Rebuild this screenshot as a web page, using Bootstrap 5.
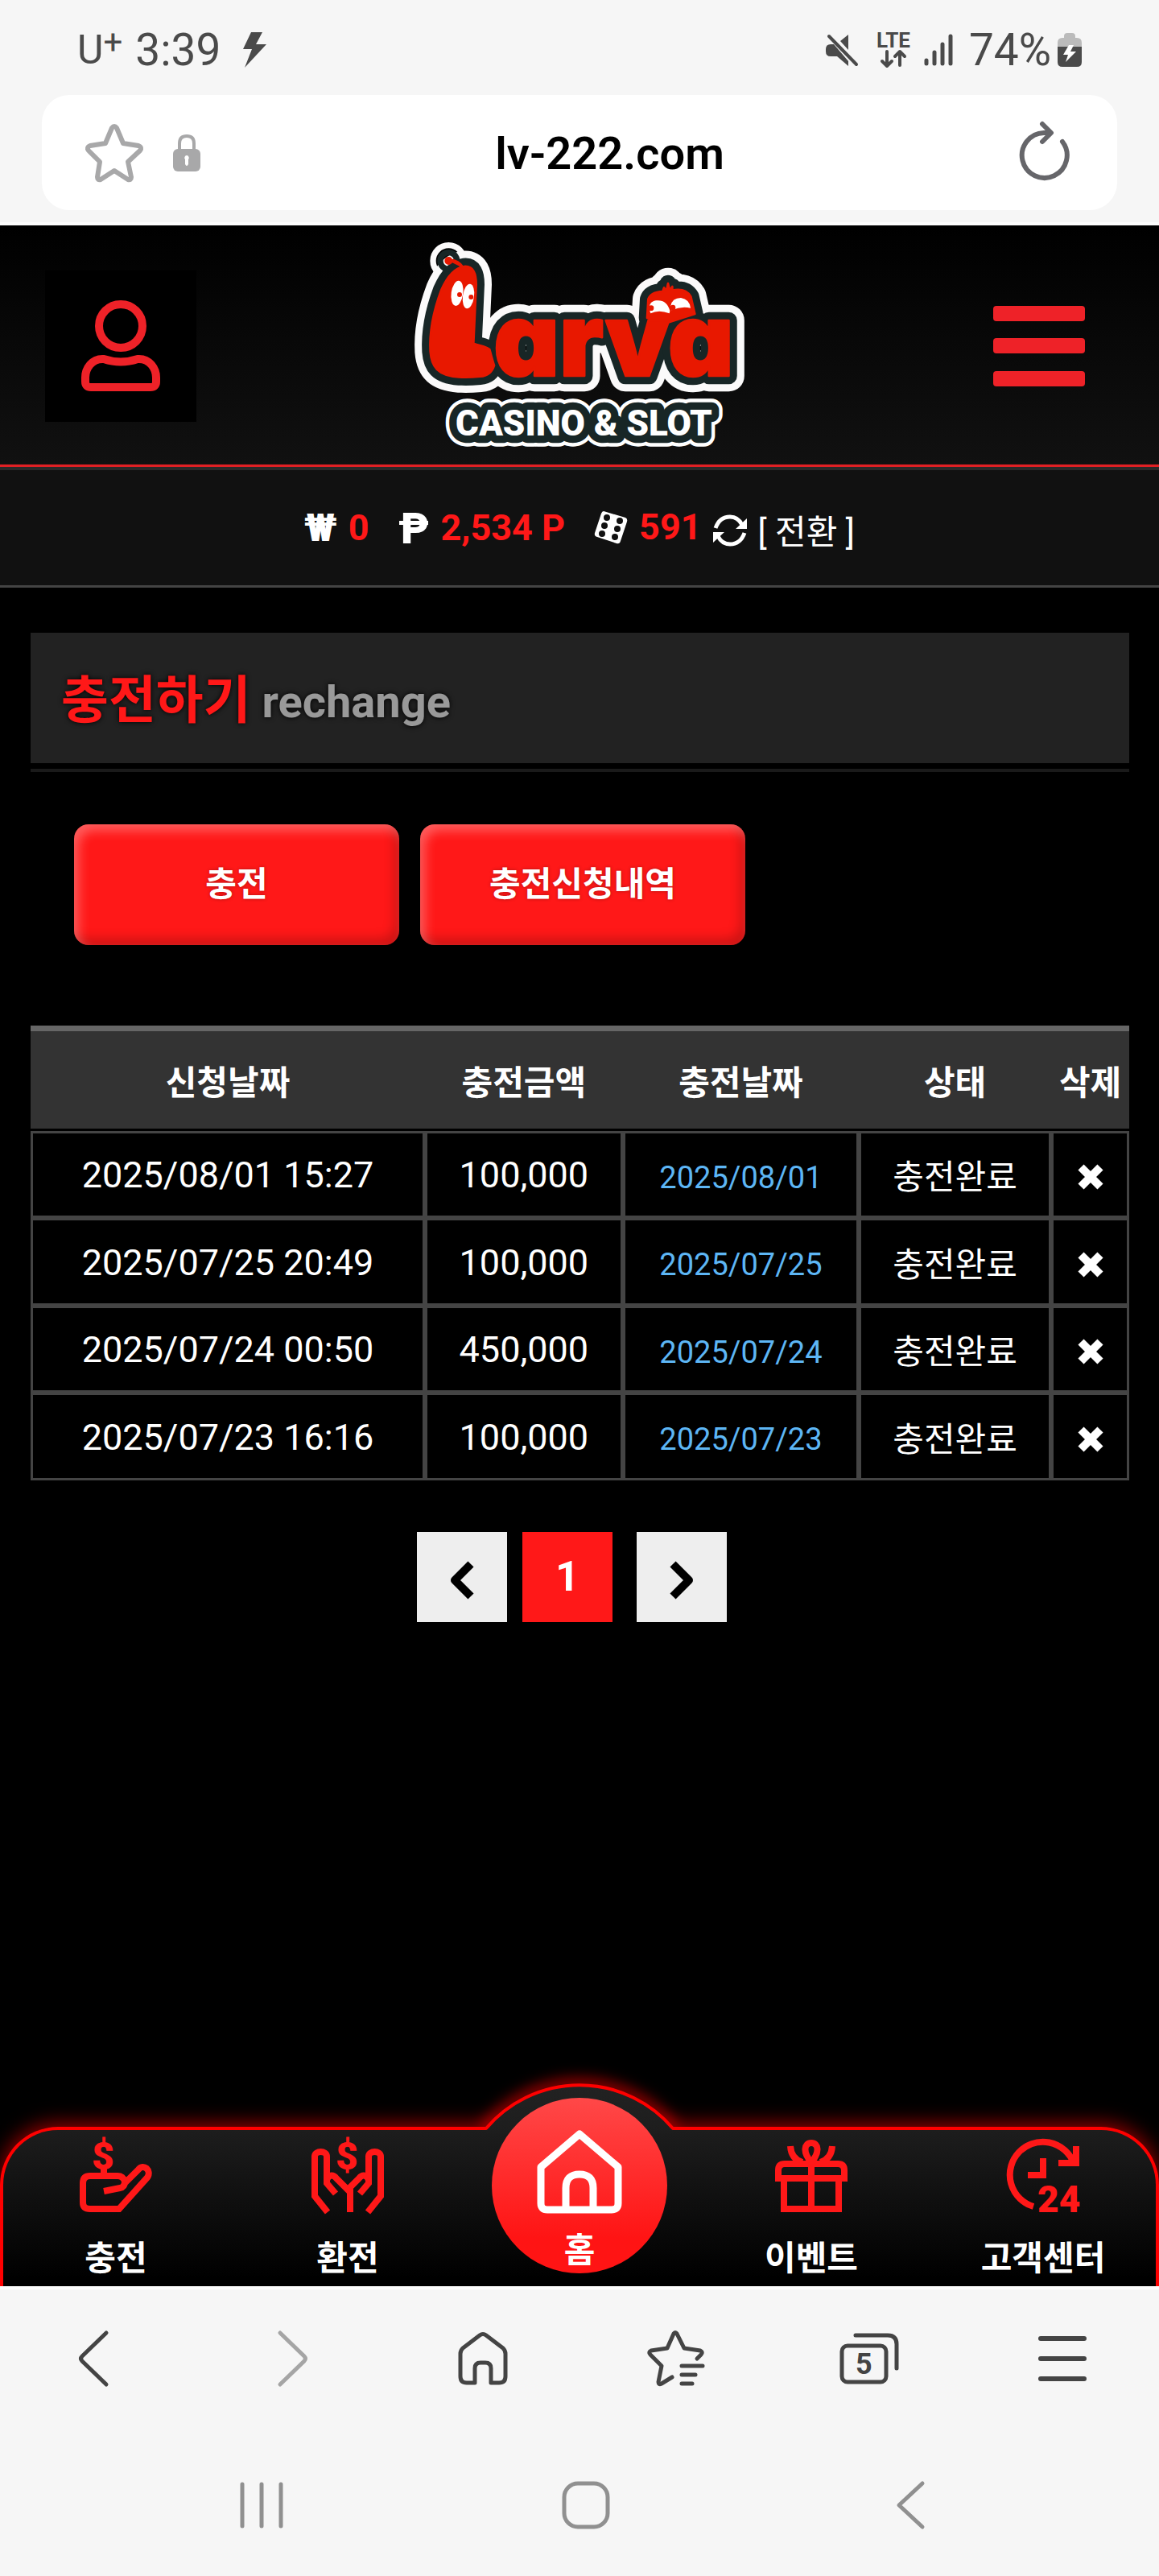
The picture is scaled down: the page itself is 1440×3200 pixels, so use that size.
<!DOCTYPE html>
<html lang="ko">
<head>
<meta charset="utf-8">
<meta name="viewport" content="width=device-width, initial-scale=1">
<title>충전하기 - Larva Casino &amp; Slot</title>
<link href="https://cdn.jsdelivr.net/npm/bootstrap@5.3.0/dist/css/bootstrap.min.css" rel="stylesheet">
<script src="https://cdn.jsdelivr.net/npm/bootstrap@5.3.0/dist/js/bootstrap.bundle.min.js"></script>
<style>
  :root { --red: #ff1818; --ink: #4a4a4a; --chrome: #f6f6f6; }
  body { background: #000; color: #fff; font-family: Roboto, "Noto Sans CJK KR", sans-serif; font-size: 42px; line-height: 1.2; }
  svg { display: block; flex: none; overflow: visible; }
  .plain { background: none; border: 0; padding: 0; color: inherit; text-decoration: none; }

  /* phone status bar and address bar */
  .phone-top { background: var(--chrome); color: var(--ink); border-bottom: 4px solid #fdfdfd; padding: 0 52px 15px; }
  .status-line { height: 118px; padding: 6px 44px 0 44px; font-size: 55px; font-weight: 400; line-height: 64px; }
  .carrier { font-size: 50px; line-height: 64px; }
  .carrier sup { font-size: 42px; top: -12px; line-height: 0; }
  .charge { margin-left: 20px; }
  .address { background: #fff; height: 143px; border-radius: 34px; padding: 0 60px 0 54px; }
  .lock { margin-left: 37px; }
  .address input { font-size: 56px; font-weight: 600; color: #000; min-width: 0; padding-top: 4px; }

  /* site header */
  .site-head { background: linear-gradient(#000, #111); height: 304px; border-bottom: 4px solid #2a2a2a; }
  .site-head-inner { height: 300px; border-bottom: 3px solid #e02024; padding: 2px 92px 0 56px; }
  .head-side { flex: 1 1 0; }
  .head-left { margin-right: 36px; }
  .user-btn { width: 188px; height: 188px; background: #000; }
  .balance { background: #111; height: 146px; border-bottom: 3px solid #444; font-size: 45px; font-weight: 700; gap: 37px; }
  .balance strong { color: var(--red); font-weight: 700; }
  .coin { gap: 14px; }
  .won { font-size: 48px; font-weight: 900; }
  .convert { font-size: 42px; font-weight: 400; padding-top: 14px; }

  /* content */
  .content { padding: 56px 37px 80px 38px; }
  .page-title { background: #222; height: 162px; padding: 8px 38px 0; gap: 14px; text-shadow: 0 0 6px #000; margin: 0 0 7px; }
  .title-ko { color: var(--red); font-size: 64px; font-weight: 700; }
  .title-en { color: #999; font-size: 56px; font-weight: 700; padding-top: 4px; }
  .title-rule { height: 4px; background: #1a1a1a; }
  .tabs-row { padding: 65px 54px 100px; gap: 26px; }
  .tab-btn { width: 404px; height: 150px; border: 0; border-radius: 18px; background: var(--red); color: #fff; font-size: 42px; font-weight: 700;
    box-shadow: inset 6px 8px 14px rgba(255,255,255,.3), inset -6px -8px 14px rgba(0,0,0,.2); text-shadow: 0 0 4px rgba(0,0,0,.3); }
  .history { border-collapse: separate; border-spacing: 0; table-layout: fixed; width: 100%; text-align: center; margin: 0; }
  .history th { background: #333; border-top: 7px solid #666; border-bottom: 3px solid #000; height: 131px; padding: 10px 0 0; font-size: 42px; font-weight: 700; vertical-align: middle; white-space: nowrap; }
  .history td { border: 3px solid #444; height: 108px; padding: 2px 0 0; font-size: 45px; line-height: 54px; vertical-align: middle; white-space: nowrap; }
  .history tr:nth-child(even) td { height: 109px; }
  .history .done-date { color: #5db6f5; font-size: 38px; padding-top: 7px; }
  .history .state { font-size: 42px; padding-top: 8px; }
  .history .erase { padding-top: 8px; }
  .pager { padding: 64px 20px 0 0; gap: 19px; margin: 0; }
  .page-box { width: 112px; height: 112px; background: #eee; color: #000; font-size: 52px; font-weight: 700; text-decoration: none; }
  .page-box.current { background: var(--red); color: #fff; }
  .page-next { margin-left: 11px; }

  /* bottom site menu */
  .dock { position: relative; height: 198px; border: 4px solid #f00; border-bottom: 0; border-radius: 72px 72px 0 0; background: linear-gradient(#1d1d1d, #000 95%);
    box-shadow: 0 -4px 24px rgba(255,0,0,.6); }
  .dock-bump { position: absolute; left: 50%; top: -88px; margin-left: -160px; }
  .dock-items { position: relative; margin: 0 -4px; }
  .dock-link { flex: 1 1 0; height: 194px; padding-top: 12px; gap: 28px; color: #fff; text-decoration: none; font-size: 42px; font-weight: 700; line-height: 60px; }
  .dock-link svg { color: var(--red); }
  .home-disc { width: 218px; height: 218px; border-radius: 50%; background: linear-gradient(#ff4848, #ff1414 80%); margin-top: -40px; padding-top: 40px; gap: 16px; }
  .home-disc svg { color: #fff; }

  /* phone browser and system bars */
  .phone-bottom { position: relative; background: var(--chrome); color: #444; border-top: 4px solid #fdfdfd; }
  .tools { height: 172px; }
  .tools > *, .keys > * { flex: 1 1 0; }
  .keys { height: 184px; color: #909090; padding: 8px 107px 0 123px; }
</style>
</head>
<body class="d-flex flex-column min-vh-100">

<header class="phone-top">
  <div class="status-line d-flex align-items-center justify-content-between">
    <div class="d-flex align-items-center">
      <span class="carrier">U<sup>+</sup></span>
      <span class="ms-3">3:39</span>
      <svg class="ms-4" width="40" height="44" viewBox="0 0 40 44" fill="currentColor" aria-hidden="true"><path d="M14 0H28L20 15H33L6 44L15 21H4Z"/></svg>
    </div>
    <div class="d-flex align-items-center">
      <svg width="40" height="40" viewBox="0 0 40 40" fill="currentColor" aria-hidden="true"><path d="M28 1V20L18 9ZM6 13H10L28 34V40L14 28H6Q0 28 0 22V19Q0 13 6 13Z"/><path d="M4 3L38 38" stroke="currentColor" stroke-width="4" stroke-linecap="round"/></svg>
      <svg class="ms-4" width="42" height="46" viewBox="0 0 42 46" fill="currentColor" aria-hidden="true"><text x="-1" y="20" font-family="Roboto" font-size="26" font-weight="700">LTE</text><path d="M12 25V43M6 37L12 43L18 37M28 42V25M22 31L28 25L34 31" fill="none" stroke="currentColor" stroke-width="4" stroke-linecap="round" stroke-linejoin="round"/></svg>
      <svg class="ms-3" width="36" height="40" viewBox="0 0 36 40" fill="none" stroke="currentColor" stroke-width="5" stroke-linecap="round" aria-hidden="true"><path d="M3 33V37M13 23V37M23 13V37M33 3V37"/></svg>
      <span class="charge">74%</span>
      <svg class="ms-2" width="30" height="42" viewBox="0 0 30 42" aria-hidden="true"><path d="M8 4Q8 0 12 0H18Q22 0 22 4V6H24Q30 6 30 12V18H0V12Q0 6 6 6H8Z" fill="#bbb"/><path d="M0 17H30V36Q30 42 24 42H6Q0 42 0 36Z" fill="currentColor"/><path d="M14 15L7 27H13L10 36L23 23H16L20 15Z" fill="#fff"/></svg>
    </div>
  </div>
  <div class="address d-flex align-items-center">
    <button class="plain" type="button" aria-label="즐겨찾기 추가"><svg width="72" height="72" viewBox="0 0 72 72" fill="none" stroke="#a8a8a9" stroke-width="6" stroke-linejoin="round"><path d="M33 5Q36 1 39 5L47 24L66 27Q71 29 68 33L53 47L57 66Q57 70 53 69L36 58L19 69Q15 70 15 66L18 47L4 33Q1 29 6 27L25 24Z"/></svg></button>
    <svg class="lock" width="34" height="46" viewBox="0 0 34 46" aria-hidden="true"><path d="M8 20V11Q8 2 17 2Q26 2 26 11V20" fill="none" stroke="#a8a8a9" stroke-width="4"/><rect y="18" width="34" height="28" rx="6" fill="#a8a8a9"/><path d="M17 26A3 3 0 0 1 19 31V37Q17 41 15 37V31A3 3 0 0 1 17 26Z" fill="#fff"/></svg>
    <input class="plain flex-grow-1 text-center" type="text" value="lv-222.com" aria-label="주소">
    <button class="plain" type="button" aria-label="새로고침"><svg width="62" height="74" viewBox="0 0 62 74" fill="none" stroke="#66666a" stroke-width="6" stroke-linecap="round" stroke-linejoin="round"><path d="M54 23A28 28 0 1 1 31 12H38M29 1L40 12L29 23"/></svg></button>
  </div>
</header>

<div class="site-head">
  <div class="site-head-inner d-flex align-items-center">
    <div class="head-side head-left">
      <button class="plain user-btn d-flex align-items-center justify-content-center" type="button" aria-label="내 정보">
        <svg width="100" height="114" viewBox="0 0 100 114" fill="none" stroke="#ee2228" stroke-width="10" stroke-linejoin="round"><circle cx="50" cy="32" r="27"/><path d="M29 73Q50 80 71 73C86 72 94 85 94 96V101Q94 108 87 108H13Q6 108 6 101V96C6 85 14 72 29 73Z"/></svg>
      </button>
    </div>
    <a class="plain" href="#" aria-label="Larva Casino &amp; Slot">
      <svg width="420" height="265" viewBox="90 51 1260 795">
        <defs>
          <g id="larva-shape" stroke-linejoin="round" stroke-linecap="round">
            <path d="M290 153C325 150 335 180 335 220L325 440C350 450 365 448 385 462Q395 500 402 522Q390 560 350 563Q300 568 270 565C190 560 168 525 164 470C160 400 175 320 205 240Q240 160 290 153Z"/>
            <path d="M232 132Q265 128 285 158" stroke-width="12"/>
            <circle cx="232" cy="132" r="11"/>
            <path d="M972 345L976 275Q985 248 1030 246L1035 232L1044 244L1050 216L1056 242L1066 228L1066 242Q1115 232 1135 265L1150 330L1040 365Z"/>
            <text x="400" y="560" font-family="Inter, sans-serif" font-size="380" font-weight="900" style="font-feature-settings:'cv11'">arva</text>
          </g>
          <text id="casino-word" x="258" y="782" font-family="Roboto, sans-serif" font-size="132" font-weight="900" stroke-linejoin="round">CASINO &amp; SLOT</text>
        </defs>
        <use href="#casino-word" fill="#fff" stroke="#fff" stroke-width="82"/>
        <use href="#casino-word" fill="#182626" stroke="#182626" stroke-width="56"/>
        <use href="#larva-shape" fill="#fbfafa" stroke="#fbfafa" stroke-width="116"/>
        <use href="#larva-shape" fill="#182626" stroke="#182626" stroke-width="62"/>
        <use href="#casino-word" fill="#fff"/>
        <use href="#larva-shape" fill="#e81800" stroke="#e81800" stroke-width="8"/>
        <g fill="#fff"><ellipse cx="264" cy="253" rx="22" ry="47" transform="rotate(8 264 253)"/><ellipse cx="306" cy="264" rx="21" ry="46" transform="rotate(8 306 264)"/>
          <path d="M982 318Q975 285 1005 280Q1045 275 1057 318L1055 328Q1015 312 985 328Z"/><path d="M1060 300Q1065 270 1098 270Q1130 275 1134 308Q1100 300 1064 316Z"/></g>
        <g fill="#e81800"><circle cx="273" cy="258" r="9"/><circle cx="316" cy="267" r="9"/><circle cx="987" cy="308" r="10"/><circle cx="1068" cy="306" r="10"/></g>
      </svg>
    </a>
    <div class="head-side d-flex justify-content-end">
      <button class="plain" type="button" aria-label="메뉴"><svg width="114" height="102" viewBox="0 0 114 102" fill="#ee2228"><rect y="1" width="114" height="19" rx="4"/><rect y="41" width="114" height="19" rx="4"/><rect y="82" width="114" height="19" rx="4"/></svg></button>
    </div>
  </div>
</div>

<div class="balance d-flex align-items-center justify-content-center">
  <span class="coin d-flex align-items-center"><span class="won">₩</span><strong>0</strong></span>
  <span class="coin d-flex align-items-center"><svg width="38" height="40" viewBox="0 0 38 40" fill="#fff" aria-hidden="true"><text x="2" y="39" font-family="Roboto" font-size="54" font-weight="900">P</text><rect y="11" width="36" height="5"/></svg><strong>2,534 P</strong></span>
  <span class="coin d-flex align-items-center">
    <svg width="41" height="40" viewBox="0 0 41 40" aria-hidden="true"><path d="M11 0L38 8Q41 9 40 13L32 37Q31 41 27 40L3 32Q-1 31 0 27L8 3Q9 0 11 0Z" fill="#fff"/><g fill="#111"><circle cx="15" cy="8" r="4"/><circle cx="12" cy="18" r="4"/><circle cx="9" cy="28" r="4"/><circle cx="31" cy="12" r="4"/><circle cx="28" cy="22" r="4"/><circle cx="25" cy="32" r="4"/></g></svg>
    <strong>591</strong>
    <button class="plain coin d-flex align-items-center" type="button">
      <svg width="42" height="40" viewBox="0 0 42 40" class="mt-2" fill="none" stroke="#fff" stroke-width="5" aria-hidden="true"><path d="M3 17Q8 3 21 3Q31 3 36 13M39 23Q34 37 21 37Q11 37 6 27"/><path d="M42 5V18H28ZM0 35V22H14Z" fill="#fff" stroke="none"/></svg>
      <span class="convert">[ 전환 ]</span>
    </button>
  </span>
</div>

<main class="content flex-grow-1">
  <h1 class="page-title d-flex align-items-center"><span class="title-ko">충전하기</span><span class="title-en">rechange</span></h1>
  <div class="title-rule"></div>

  <div class="tabs-row d-flex">
    <button class="tab-btn" type="button">충전</button>
    <button class="tab-btn" type="button">충전신청내역</button>
  </div>

  <table class="history">
    <colgroup><col style="width:35.9%"><col style="width:18%"><col style="width:21.5%"><col style="width:17.5%"><col style="width:7.1%"></colgroup>
    <thead><tr><th scope="col">신청날짜</th><th scope="col">충전금액</th><th scope="col">충전날짜</th><th scope="col">상태</th><th scope="col">삭제</th></tr></thead>
    <tbody>
      <tr><td>2025/08/01 15:27</td><td>100,000</td><td class="done-date">2025/08/01</td><td class="state">충전완료</td><td class="erase"><button class="plain" type="button" aria-label="삭제"><svg width="32" height="32" viewBox="0 0 32 32" stroke="#fff" stroke-width="10"><path d="M4 4L28 28M28 4L4 28"/></svg></button></td></tr>
      <tr><td>2025/07/25 20:49</td><td>100,000</td><td class="done-date">2025/07/25</td><td class="state">충전완료</td><td class="erase"><button class="plain" type="button" aria-label="삭제"><svg width="32" height="32" viewBox="0 0 32 32" stroke="#fff" stroke-width="10"><path d="M4 4L28 28M28 4L4 28"/></svg></button></td></tr>
      <tr><td>2025/07/24 00:50</td><td>450,000</td><td class="done-date">2025/07/24</td><td class="state">충전완료</td><td class="erase"><button class="plain" type="button" aria-label="삭제"><svg width="32" height="32" viewBox="0 0 32 32" stroke="#fff" stroke-width="10"><path d="M4 4L28 28M28 4L4 28"/></svg></button></td></tr>
      <tr><td>2025/07/23 16:16</td><td>100,000</td><td class="done-date">2025/07/23</td><td class="state">충전완료</td><td class="erase"><button class="plain" type="button" aria-label="삭제"><svg width="32" height="32" viewBox="0 0 32 32" stroke="#fff" stroke-width="10"><path d="M4 4L28 28M28 4L4 28"/></svg></button></td></tr>
    </tbody>
  </table>

  <nav aria-label="페이지">
    <ul class="pager list-unstyled d-flex justify-content-center">
      <li><a class="page-box d-flex align-items-center justify-content-center" href="#" aria-label="이전"><svg width="32" height="48" viewBox="0 0 32 48" fill="none" stroke="#000" stroke-width="10" stroke-linejoin="round" class="mt-2"><path d="M27 4L7 24L27 44"/></svg></a></li>
      <li><a class="page-box current d-flex align-items-center justify-content-center" href="#" aria-current="page">1</a></li>
      <li class="page-next"><a class="page-box d-flex align-items-center justify-content-center" href="#" aria-label="다음"><svg width="32" height="48" viewBox="0 0 32 48" fill="none" stroke="#000" stroke-width="10" stroke-linejoin="round" class="mt-2"><path d="M5 4L25 24L5 44"/></svg></a></li>
    </ul>
  </nav>
</main>

<nav class="dock" aria-label="하단 메뉴">
  <svg class="dock-bump" width="320" height="92" viewBox="0 0 320 92" style="overflow:hidden" aria-hidden="true">
    <defs>
      <linearGradient id="bump-fill" x1="0" y1="0" x2="0" y2="1"><stop offset="0" stop-color="#222"/><stop offset="1" stop-color="#1d1d1d"/></linearGradient>
      <filter id="bump-glow" x="-20%" y="-60%" width="140%" height="220%"><feGaussianBlur stdDeviation="9"/></filter>
      <clipPath id="above-line"><rect width="320" height="84"/></clipPath>
    </defs>
    <g clip-path="url(#above-line)"><path d="M43 87A152 152 0 0 1 277 87" fill="none" stroke="#f00" stroke-opacity=".7" stroke-width="14" filter="url(#bump-glow)"/></g>
    <path d="M44 92V86A152 152 0 0 1 276 86V92Z" fill="url(#bump-fill)"/>
    <path d="M40 86H44A152 152 0 0 1 276 86H280" fill="none" stroke="#f00" stroke-width="4" stroke-linejoin="round"/>
  </svg>
  <div class="dock-items d-flex">
    <a class="dock-link d-flex flex-column align-items-center" href="#">
      <svg width="90" height="90" viewBox="0 0 90 90" fill="none" stroke="currentColor" stroke-width="8" aria-hidden="true"><path d="M30 64L50 60Q56 59 56 52Q54 45 47 45H13Q4 45 4 54V78Q4 86 13 86H49L84 47C90 38 79 29 73 37L56 54M30 36V45"/><text x="15" y="37" font-family="Roboto" font-size="48" font-weight="900" fill="currentColor" stroke="none">$</text></svg>
      <span>충전</span>
    </a>
    <a class="dock-link d-flex flex-column align-items-center" href="#">
      <svg width="90" height="90" viewBox="0 0 90 90" fill="none" stroke="currentColor" stroke-width="8" aria-hidden="true"><path d="M20 90L4 70V21C4 13 19 13 19 21V54L30 67M19 50C22 43 27 43 31 48L45 62L59 48C63 43 68 43 71 50M70 90L86 70V21C86 13 71 13 71 21V54L60 67M48 90V61"/><text x="30" y="37" font-family="Roboto" font-size="48" font-weight="900" fill="currentColor" stroke="none">$</text></svg>
      <span>환전</span>
    </a>
    <a class="dock-link d-flex flex-column align-items-center pt-0" href="#">
      <span class="home-disc d-flex flex-column align-items-center">
        <svg width="106" height="104" viewBox="0 0 106 104" fill="none" stroke="currentColor" stroke-width="9" stroke-linejoin="round" aria-hidden="true"><path d="M53 5L5 46V91Q5 99 13 99H93Q101 99 101 91V46ZM36 99V72Q36 55 53 55Q70 55 70 72V99"/></svg>
        <span>홈</span>
      </span>
    </a>
    <a class="dock-link d-flex flex-column align-items-center" href="#">
      <svg width="90" height="90" viewBox="0 0 90 90" fill="none" stroke="currentColor" stroke-width="8" aria-hidden="true"><path d="M4 48V38Q4 30 12 30H78Q86 30 86 38V48ZM11 50V86H79V50M45 28V86M45 28C34 16 36 4 45 4C54 4 56 16 45 28ZM19 8Q20 24 34 28M71 8Q70 24 56 28"/></svg>
      <span>이벤트</span>
    </a>
    <a class="dock-link d-flex flex-column align-items-center" href="#">
      <svg width="90" height="90" viewBox="0 0 90 90" fill="none" stroke="currentColor" stroke-width="8" aria-hidden="true"><path d="M33 83A41 41 0 1 1 83 29M86 8V29H64M45 23V44H26"/><text x="38" y="90" font-family="Roboto" font-size="46" font-weight="900" fill="currentColor" stroke="none">24</text></svg>
      <span>고객센터</span>
    </a>
  </div>
</nav>

<footer class="phone-bottom">
  <div class="tools d-flex align-items-center">
    <button class="plain d-flex justify-content-center" type="button" aria-label="뒤로"><svg width="44" height="70" viewBox="0 0 44 70" fill="none" stroke="currentColor" stroke-width="5" stroke-linecap="round" stroke-linejoin="round"><path d="M34 3L4 32Q1 35 4 38L34 67"/></svg></button>
    <button class="plain d-flex justify-content-center" type="button" aria-label="앞으로" disabled><svg width="32" height="70" viewBox="0 0 32 70" fill="none" stroke="#a5a5a5" stroke-width="5" stroke-linecap="round" stroke-linejoin="round"><path d="M4 3L34 32Q37 35 34 38L4 67"/></svg></button>
    <button class="plain d-flex justify-content-center" type="button" aria-label="홈"><svg width="62" height="66" viewBox="0 0 62 66" fill="none" stroke="currentColor" stroke-width="5" stroke-linejoin="round"><path d="M21 63H11Q3 63 3 55V27Q3 23 6 20L27 4Q31 1 35 4L56 20Q59 23 59 27V55Q59 63 51 63H41V45Q41 38 34 38H28Q21 38 21 45Z"/></svg></button>
    <button class="plain d-flex justify-content-center" type="button" aria-label="북마크"><svg width="72" height="70" viewBox="0 0 72 70" fill="none" stroke="currentColor" stroke-width="5" stroke-linecap="round" stroke-linejoin="round"><path d="M62 35L67 30Q70 27 66 25L46 22L37 4Q35 1 33 4L25 22L5 25Q1 27 4 30L18 44L14 64Q14 68 18 66L31 58M43 44H69M43 55H60M43 66H56"/></svg></button>
    <button class="plain d-flex justify-content-center" type="button" aria-label="탭 5개"><svg width="74" height="64" viewBox="0 0 74 64" fill="none" stroke="currentColor" stroke-width="5" stroke-linecap="round"><rect x="3" y="16" width="55" height="45" rx="7"/><path d="M20 3H60Q71 3 71 14V44"/><text x="20" y="51" font-family="Roboto" font-size="36" font-weight="700" fill="currentColor" stroke="none">5</text></svg></button>
    <button class="plain d-flex justify-content-center" type="button" aria-label="메뉴"><svg width="60" height="56" viewBox="0 0 60 56" stroke="currentColor" stroke-width="6" stroke-linecap="round"><path d="M3 3H57M3 28H57M3 53H57"/></svg></button>
  </div>
  <div class="keys d-flex align-items-center">
    <button class="plain d-flex justify-content-center" type="button" aria-label="최근 앱"><svg width="54" height="58" viewBox="0 0 54 58" stroke="currentColor" stroke-width="5" stroke-linecap="round"><path d="M3 3V55M27 3V55M51 3V55"/></svg></button>
    <button class="plain d-flex justify-content-center" type="button" aria-label="홈 화면"><svg width="60" height="60" viewBox="0 0 60 60" fill="none" stroke="currentColor" stroke-width="5"><rect x="3" y="3" width="54" height="54" rx="17"/></svg></button>
    <button class="plain d-flex justify-content-center" type="button" aria-label="이전 화면"><svg width="36" height="60" viewBox="0 0 36 60" fill="none" stroke="currentColor" stroke-width="5" stroke-linecap="round" stroke-linejoin="round"><path d="M33 3L4 30L33 57"/></svg></button>
  </div>
</footer>
</body>
</html>
